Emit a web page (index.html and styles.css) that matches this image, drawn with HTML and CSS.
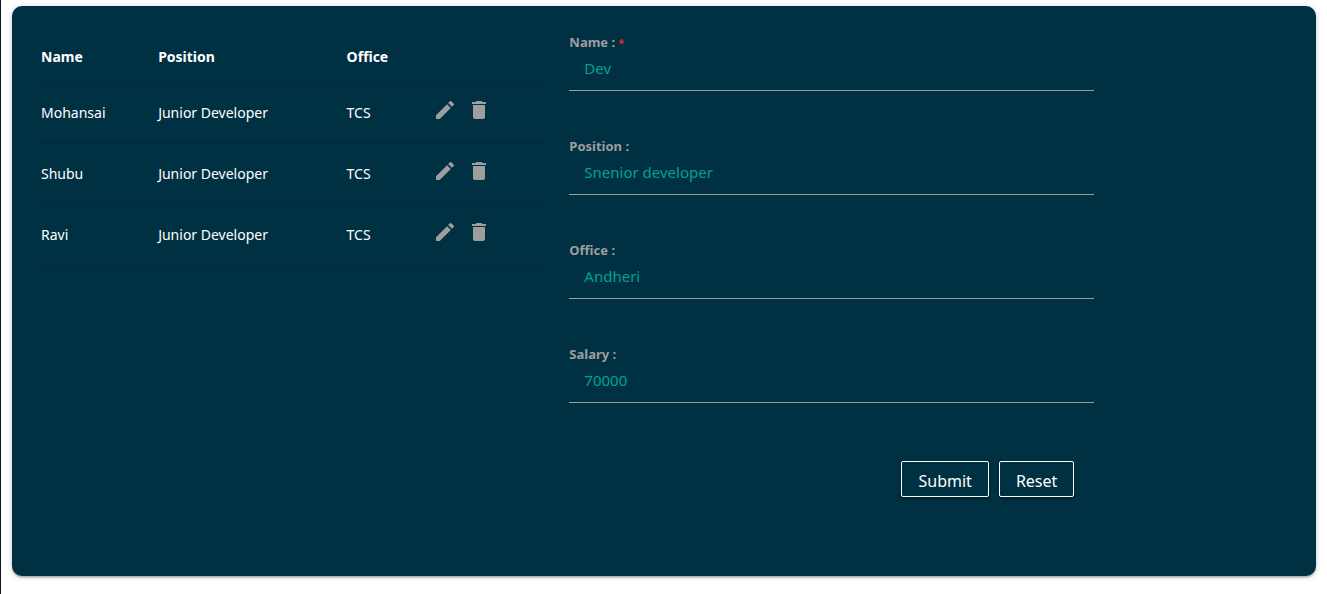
FILE: index.html
```html
<!DOCTYPE html>
<html lang="en">
<head>
<meta charset="utf-8">
<meta name="viewport" content="width=device-width, initial-scale=1">
<title>Employees</title>
<link rel="stylesheet" href="styles.css">
</head>
<body>
<svg class="sprite" aria-hidden="true">
  <symbol id="edit" viewBox="0 0 24 24"><path d="M3 17.250V21h3.750L17.810 9.940l-3.750-3.750L3 17.250zM20.710 7.040a1 1 0 0 0 0-1.410l-2.340-2.340a1 1 0 0 0-1.410 0l-1.830 1.830 3.750 3.750 1.830-1.830z"/></symbol>
  <symbol id="trash" viewBox="0 0 24 24"><path d="M6 19c0 1.100.9 2 2 2h8c1.100 0 2-.9 2-2V7H6v12zM19 4h-3.500l-1-1h-5l-1 1H5v2h14V4z"/></symbol>
</svg>
<main class="card">
  <section class="column">
    <table class="table">
      <thead>
        <tr><th class="col-name">Name</th><th class="col-position">Position</th><th class="col-office">Office</th><td></td></tr>
      </thead>
      <tbody>
        <tr>
          <td>Mohansai</td><td>Junior Developer</td><td>TCS</td>
          <td><div class="actions"><button class="icon-btn" type="button" aria-label="Edit Mohansai"><svg class="icon"><use href="#edit"/></svg></button><button class="icon-btn" type="button" aria-label="Delete Mohansai"><svg class="icon"><use href="#trash"/></svg></button></div></td>
        </tr>
        <tr>
          <td>Shubu</td><td>Junior Developer</td><td>TCS</td>
          <td><div class="actions"><button class="icon-btn" type="button" aria-label="Edit Shubu"><svg class="icon"><use href="#edit"/></svg></button><button class="icon-btn" type="button" aria-label="Delete Shubu"><svg class="icon"><use href="#trash"/></svg></button></div></td>
        </tr>
        <tr>
          <td>Ravi</td><td>Junior Developer</td><td>TCS</td>
          <td><div class="actions"><button class="icon-btn" type="button" aria-label="Edit Ravi"><svg class="icon"><use href="#edit"/></svg></button><button class="icon-btn" type="button" aria-label="Delete Ravi"><svg class="icon"><use href="#trash"/></svg></button></div></td>
        </tr>
      </tbody>
    </table>
  </section>
  <section class="column">
    <form class="form">
      <div class="field">
        <label class="label" for="name">Name : <span class="required">*</span></label>
        <input class="input" id="name" type="text" value="Dev">
      </div>
      <div class="field">
        <label class="label" for="position">Position :</label>
        <input class="input" id="position" type="text" value="Snenior developer">
      </div>
      <div class="field">
        <label class="label" for="office">Office :</label>
        <input class="input" id="office" type="text" value="Andheri">
      </div>
      <div class="field">
        <label class="label" for="salary">Salary :</label>
        <input class="input" id="salary" type="text" value="70000">
      </div>
      <div class="buttons">
        <button class="btn" type="submit">Submit</button>
        <button class="btn" type="reset">Reset</button>
      </div>
    </form>
  </section>
</main>
</body>
</html>
```
FILE: styles.css
```css
* {
  box-sizing: border-box;
}

body {
  margin: 0;
  min-height: 100vh;
  padding: 6px 11px 18px;
  border-left: 1px solid #12161c;
  background: #fff;
  font-family: "Segoe UI", "Noto Sans", sans-serif;
  font-size: 14px;
  line-height: 20px;
}

.sprite {
  display: none;
}

.card {
  display: grid;
  grid-template-columns: 5fr 7fr;
  padding: 26px 12px 79px;
  border-radius: 10px;
  background: #003143;
  box-shadow: 0 2px 2px rgba(0, 0, 0, 0.14), 0 3px 1px -2px rgba(0, 0, 0, 0.12), 0 1px 5px rgba(0, 0, 0, 0.2);
}

.column {
  padding: 0 12px;
}

.table {
  width: 100%;
  border-spacing: 0;
  table-layout: fixed;
  color: #fff;
}

.table th,
.table td {
  height: 61px;
  padding: 0 5px;
  border-bottom: 1px solid #002a3b;
  text-align: left;
}

.table thead th,
.table thead td {
  height: 51px;
}

.col-name {
  width: 23%;
}

.col-position {
  width: 37%;
}

.col-office {
  width: 17%;
}

.actions {
  display: flex;
  gap: 10px;
  padding-bottom: 6px;
}

.icon-btn {
  padding: 0;
  border: 0;
  background: none;
  color: #9e9e9e;
  cursor: pointer;
}

.icon {
  display: block;
  width: 24px;
  height: 24px;
  fill: currentColor;
}

.form {
  width: 100%;
  max-width: 525px;
}

.field {
  display: flex;
  flex-direction: column;
  margin-bottom: 45px;
}

.label {
  color: #9e9e9e;
  font-size: 13px;
  font-weight: 700;
}

.required {
  color: #f22;
  font-size: 10px;
  line-height: 1;
}

.input {
  width: 100%;
  height: 39px;
  padding: 0 15px 6px;
  border: 0;
  border-bottom: 1px solid #9e9e9e;
  outline: 0;
  background: none;
  color: #00a294;
  font-family: inherit;
  font-size: 15px;
}

.buttons {
  display: flex;
  justify-content: flex-end;
  gap: 10px;
  padding: 13px 20px 0;
}

.btn {
  height: 36px;
  padding: 3px 16px 0;
  border: 1px solid #fff;
  border-radius: 2px;
  background: none;
  color: #fff;
  font-family: inherit;
  font-size: 16px;
  box-shadow: 0 2px 2px rgba(0, 0, 0, 0.14), 0 1px 5px rgba(0, 0, 0, 0.2);
  cursor: pointer;
}
```
